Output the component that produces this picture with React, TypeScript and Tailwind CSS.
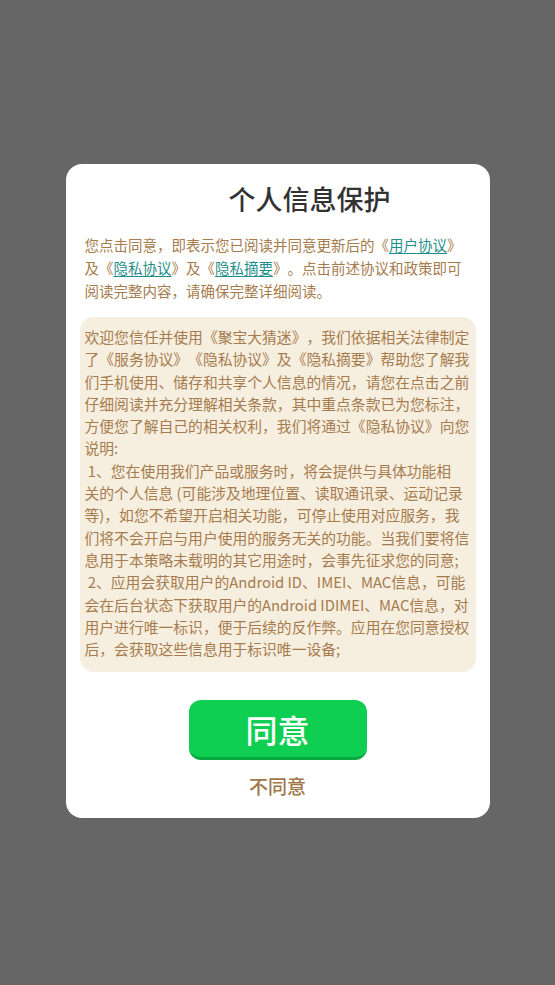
import React from 'react';

const intro: React.ReactNode[] = [
  <>您点击同意，即表示您已阅读并同意更新后的《<a className="text-[#1f8f8c] underline underline-offset-2">用户协议</a>》</>,
  <>及《<a className="text-[#1f8f8c] underline underline-offset-2">隐私协议</a>》及《<a className="text-[#1f8f8c] underline underline-offset-2">隐私摘要</a>》。点击前述协议和政策即可</>,
  <>阅读完整内容，请确保完整详细阅读。</>,
];

const lines = [
  '欢迎您信任并使用《聚宝大猜迷》，我们依据相关法律制定',
  '了《服务协议》《隐私协议》及《隐私摘要》帮助您了解我',
  '们手机使用、储存和共享个人信息的情况，请您在点击之前',
  '仔细阅读并充分理解相关条款，其中重点条款已为您标注，',
  '方便您了解自己的相关权利，我们将通过《隐私协议》向您',
  '说明:',
  ' 1、您在使用我们产品或服务时，将会提供与具体功能相',
  '关的个人信息 (可能涉及地理位置、读取通讯录、运动记录',
  '等)，如您不希望开启相关功能，可停止使用对应服务，我',
  '们将不会开启与用户使用的服务无关的功能。当我们要将信',
  '息用于本策略未载明的其它用途时，会事先征求您的同意;',
  ' 2、应用会获取用户的Android ID、IMEI、MAC信息，可能',
  '会在后台状态下获取用户的Android IDIMEI、MAC信息，对',
  '用户进行唯一标识，便于后续的反作弊。应用在您同意授权',
  '后，会获取这些信息用于标识唯一设备;',
];

export default function App() {
  return (
    <div
      className="w-[555px] h-[985px] bg-[#666666] flex items-center justify-center pb-[3px] [text-spacing-trim:space-all]"
      style={{ fontFamily: '"Noto Sans CJK SC", "Noto Sans", sans-serif' }}
    >
      <div className="w-[424px] h-[654px] bg-white rounded-[16px] flex flex-col pt-[17px]">
        <h1 className="pl-16 text-center text-[27px] leading-[36px] font-medium text-[#333333]">
          个人信息保护
        </h1>

        <div className="mt-[16px] px-[19px] text-[14.5px] leading-[23px] text-[#a67c4e]">
          {intro.map((l, i) => (
            <div key={i} className="whitespace-nowrap">{l}</div>
          ))}
        </div>

        <div className="mx-[14px] mt-[15px] h-[355px] bg-[#f6eedf] rounded-[14px] pl-[5px] pt-[9px] text-[14.8px] leading-[22.3px] text-[#a67c4e]">
          {lines.map((l, i) => (
            <div key={i} className="whitespace-pre">{l}</div>
          ))}
        </div>

        <div className="mt-[28px] flex justify-center">
          <button className="w-[178px] h-[60px] rounded-[12px] bg-[#0fcf52] border-b-[3px] border-[#0aa840] text-white text-[32px] font-medium leading-none">
            同意
          </button>
        </div>

        <div className="mt-[13px] text-center text-[19px] leading-[26px] font-medium text-[#a0764a]">
          不同意
        </div>
      </div>
    </div>
  );
}
